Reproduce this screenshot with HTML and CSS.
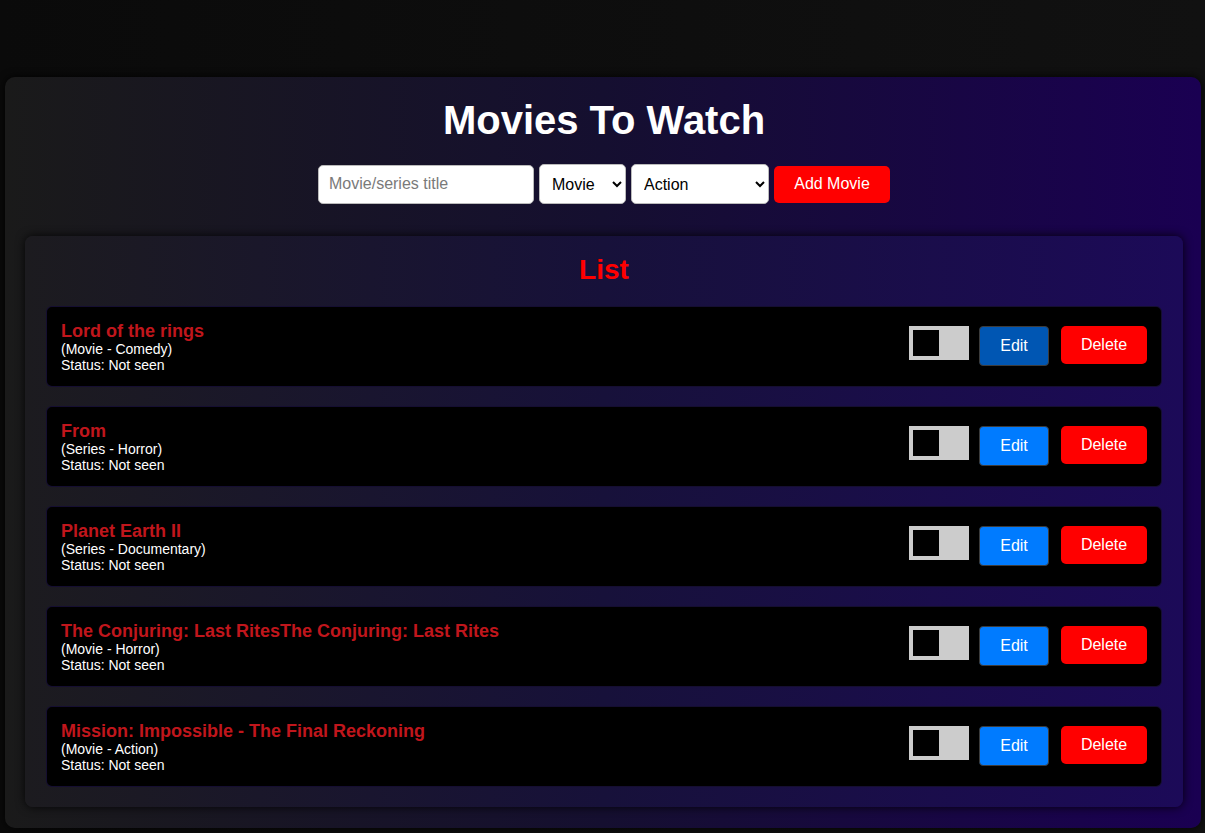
FILE: index.html
```html
<!DOCTYPE html>
<html lang="en">
<head>
<meta charset="utf-8">
<title>Movies To Watch</title>
<link rel="stylesheet" href="styles.css">
</head>
<body>
<div class="app">
  <h1 class="app-title">Movies To Watch</h1>
  <form class="add-form">
    <input class="field field-title" type="text" placeholder="Movie/series title">
    <select class="field field-type"><option>Movie</option><option>Series</option></select>
    <select class="field field-genre"><option>Action</option><option>Comedy</option><option>Horror</option><option>Documentary</option></select>
    <button type="button" class="add-btn">Add Movie</button>
  </form>
  <section class="list">
    <h2 class="list-title">List</h2>
    <div class="items">
      <div class="item">
        <div class="info">
          <div class="name">Lord of the rings</div>
          <div class="meta">(Movie - Comedy)</div>
          <div class="meta">Status: Not seen</div>
        </div>
        <div class="actions">
          <label class="switch"><span class="knob"></span></label>
          <button class="edit-btn edit-btn--hover">Edit</button>
          <button class="del-btn">Delete</button>
        </div>
      </div>
      <div class="item">
        <div class="info">
          <div class="name">From</div>
          <div class="meta">(Series - Horror)</div>
          <div class="meta">Status: Not seen</div>
        </div>
        <div class="actions">
          <label class="switch"><span class="knob"></span></label>
          <button class="edit-btn">Edit</button>
          <button class="del-btn">Delete</button>
        </div>
      </div>
      <div class="item">
        <div class="info">
          <div class="name">Planet Earth II</div>
          <div class="meta">(Series - Documentary)</div>
          <div class="meta">Status: Not seen</div>
        </div>
        <div class="actions">
          <label class="switch"><span class="knob"></span></label>
          <button class="edit-btn">Edit</button>
          <button class="del-btn">Delete</button>
        </div>
      </div>
      <div class="item">
        <div class="info">
          <div class="name">The Conjuring: Last RitesThe Conjuring: Last Rites</div>
          <div class="meta">(Movie - Horror)</div>
          <div class="meta">Status: Not seen</div>
        </div>
        <div class="actions">
          <label class="switch"><span class="knob"></span></label>
          <button class="edit-btn">Edit</button>
          <button class="del-btn">Delete</button>
        </div>
      </div>
      <div class="item">
        <div class="info">
          <div class="name">Mission: Impossible - The Final Reckoning</div>
          <div class="meta">(Movie - Action)</div>
          <div class="meta">Status: Not seen</div>
        </div>
        <div class="actions">
          <label class="switch"><span class="knob"></span></label>
          <button class="edit-btn">Edit</button>
          <button class="del-btn">Delete</button>
        </div>
      </div>
    </div>
  </section>
</div>
</body>
</html>
```
FILE: styles.css
```css
html, body {
  margin: 0;
  height: 100%;
}
body {
  background: linear-gradient(90deg, #0a0a0a 0%, #111111 100%);
  font-family: "Liberation Sans", Arial, sans-serif;
  padding: 77px 4px 0 5px;
  box-sizing: border-box;
  overflow: hidden;
}
.app {
  background: linear-gradient(90deg, #1a1a1a 0%, #150f30 50%, #1a0052 100%);
  border-radius: 10px;
  box-shadow: 0 0 8px rgba(0, 0, 0, 0.9);
  padding: 20px 18px 21px 20px;
  display: flex;
  flex-direction: column;
  align-items: stretch;
}
.app-title {
  margin: 0 0 21px;
  text-align: center;
  color: #fff;
  font-size: 40px;
  line-height: 46px;
  font-weight: bold;
}
.add-form {
  display: flex;
  justify-content: center;
  align-items: center;
  gap: 5px;
  margin: 0 0 32px;
}
.field {
  box-sizing: border-box;
  height: 40px;
  font-family: "Liberation Sans", Arial, sans-serif;
  font-size: 16px;
  border: 1px solid #bbb;
  border-radius: 5px;
  background: #fff;
  color: #000;
}
.field-title {
  width: 216px;
  height: 39px;
  padding: 0 10px;
}
.field-title::placeholder {
  color: #7a7a7a;
}
.field-type {
  width: 87px;
  padding: 0 4px 0 8px;
}
.field-genre {
  width: 138px;
  padding: 0 4px 0 8px;
}
.add-btn {
  width: 116px;
  height: 37px;
  border: none;
  border-radius: 5px;
  background: #ff0000;
  color: #fff;
  font-family: "Liberation Sans", Arial, sans-serif;
  font-size: 16px;
}
.list {
  background: linear-gradient(90deg, #1c1b1f 0%, #17113a 50%, #1c0a58 100%);
  border-radius: 8px;
  box-shadow: 0 0 10px rgba(0, 0, 0, 0.85);
  padding: 16px 21px 20px;
}
.list-title {
  margin: 0 0 18px;
  text-align: center;
  color: #ff0000;
  font-size: 28px;
  line-height: 36px;
  font-weight: bold;
}
.items {
  display: flex;
  flex-direction: column;
  gap: 19px;
}
.item {
  background: #000;
  border: 1px solid rgba(60, 40, 140, 0.35);
  border-radius: 6px;
  padding: 15px 14px 13px 14px;
  display: flex;
  align-items: center;
  justify-content: space-between;
}
.name {
  color: #c0161c;
  font-size: 18px;
  line-height: 19px;
  font-weight: bold;
}
.meta {
  color: #fff;
  font-size: 14px;
  line-height: 16px;
}
.actions {
  display: flex;
  align-items: flex-start;
  margin-top: -3px;
}
.switch {
  position: relative;
  display: block;
  width: 60px;
  height: 34px;
  background: #cccccc;
  margin-right: 10px;
}
.knob {
  position: absolute;
  left: 4px;
  top: 4px;
  width: 26px;
  height: 26px;
  background: #000;
}
.edit-btn {
  width: 70px;
  height: 40px;
  border: 1px solid #3c3c3c;
  border-radius: 4px;
  background: #007bff;
  color: #fff;
  font-family: "Liberation Sans", Arial, sans-serif;
  font-size: 16px;
  padding: 0;
  margin-right: 12px;
}
.edit-btn--hover {
  background: #0056b3;
}
.del-btn {
  width: 86px;
  height: 38px;
  border: none;
  border-radius: 5px;
  background: #ff0000;
  color: #fff;
  font-family: "Liberation Sans", Arial, sans-serif;
  font-size: 16px;
  padding: 0;
}
```
